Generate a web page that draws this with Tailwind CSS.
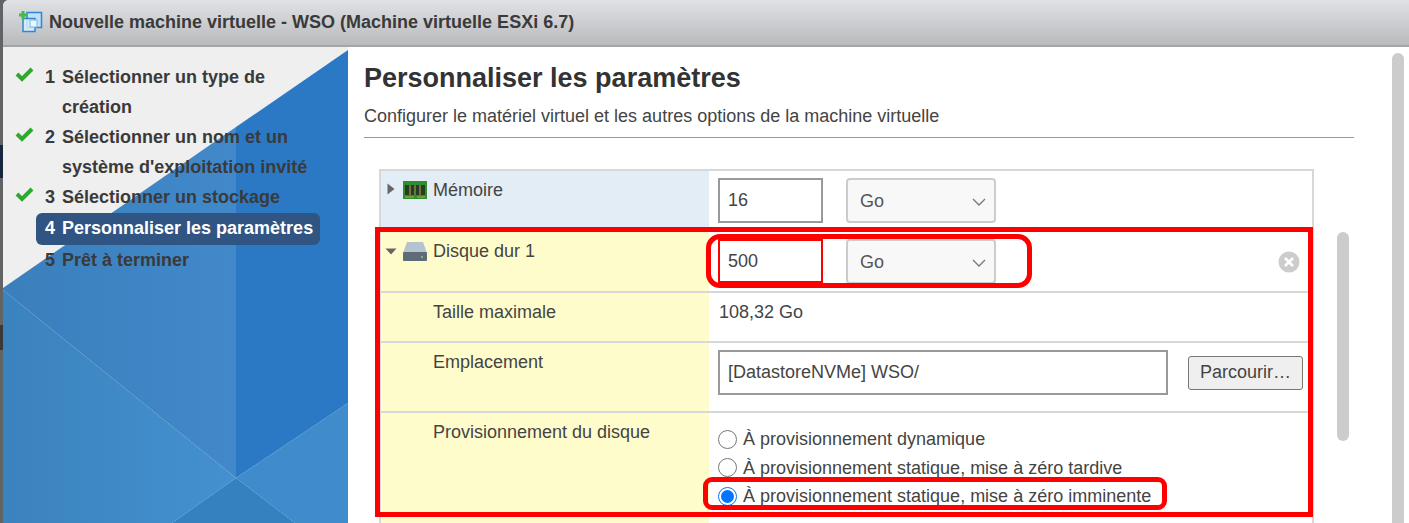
<!DOCTYPE html>
<html lang="fr">
<head>
<meta charset="utf-8">
<title>Nouvelle machine virtuelle</title>
<script src="https://cdn.jsdelivr.net/npm/@tailwindcss/browser@4"></script>
</head>
<body class="relative h-[523px] w-[1409px] overflow-hidden bg-[#626365] font-['Liberation_Sans',Arial,sans-serif] text-[18px] text-[#444]">
<div class="absolute left-0 top-[145px] h-[33px] w-[3px] bg-[#16273f]"></div>
<div class="absolute left-0 top-[325px] h-[25px] w-[3px] bg-[#3a3a36]"></div>
<div class="relative ml-[3px] flex h-[523px] w-[1406px] flex-col overflow-hidden rounded-tl-[6px] bg-white">
  <header class="flex h-[47px] shrink-0 items-center gap-[6px] border-b-[2px] border-[#a5a5a7] bg-gradient-to-b from-[#e1e2e6] to-[#b9babc] pb-[1px] pl-[15px]">
    <svg width="25" height="25" viewBox="0 0 25 25" class="shrink-0"><rect x="9" y="2.5" width="14.5" height="15" fill="#bfe0f7" stroke="#2f86d6" stroke-width="1.5"/><rect x="5" y="8.5" width="12" height="13" fill="#d9eefb" fill-opacity=".85" stroke="#2f86d6" stroke-width="1.5"/><rect x="12" y="10" width="7" height="7" fill="#eaf6fd" stroke="#7cb7e6"/><path d="M5 1v8M1 5h8" stroke="#47b84b" stroke-width="3"/></svg>
    <h1 class="text-[18px] font-bold text-[#3a3a3a]">Nouvelle machine virtuelle - WSO (Machine virtuelle ESXi 6.7)</h1>
  </header>
  <div class="flex min-h-0 flex-1">
    <nav class="relative w-[345px] shrink-0 overflow-hidden bg-[#efefef] pt-[15px] font-bold text-[#3a3a3a]">
      <svg class="absolute inset-0" width="345" height="476" viewBox="0 0 345 476">
        <defs>
          <linearGradient id="a" x1="0" x2="1" y1="0" y2="0"><stop offset="0" stop-color="#3b7fbc"/><stop offset="1" stop-color="#4189ca"/></linearGradient>
          <linearGradient id="b" x1="0" x2="1" y1="0" y2="0"><stop offset="0" stop-color="#3b83bd"/><stop offset="1" stop-color="#4490d0"/></linearGradient>
        </defs>
        <polygon points="345,3 345,356 233,431 233,80" fill="#2b79c4"/>
        <polygon points="0,241 233,80 233,431 0,243" fill="url(#a)"/>
        <polygon points="0,243 233,431 169,476 0,476" fill="url(#b)"/>
        <polygon points="233,431 345,356 345,476 292,476" fill="#3f8bcc"/>
        <polygon points="233,431 292,476 169,476" fill="#3581bf"/>
      </svg>
      <ol class="relative flex flex-col leading-[30px]">
        <li class="flex pl-[12px]"><svg width="19" height="16" viewBox="0 0 19 16" class="mt-[4px] shrink-0"><path d="M2 8l5 5L17 3" fill="none" stroke="#2fa82f" stroke-width="4"/></svg><span class="w-[17px] pl-[11px] box-content">1</span><span class="w-[240px]">Sélectionner un type de création</span></li>
        <li class="flex pl-[12px]"><svg width="19" height="16" viewBox="0 0 19 16" class="mt-[4px] shrink-0"><path d="M2 8l5 5L17 3" fill="none" stroke="#2fa82f" stroke-width="4"/></svg><span class="w-[17px] pl-[11px] box-content">2</span><span class="w-[270px]">Sélectionner un nom et un système d'exploitation invité</span></li>
        <li class="flex pl-[12px]"><svg width="19" height="16" viewBox="0 0 19 16" class="mt-[4px] shrink-0"><path d="M2 8l5 5L17 3" fill="none" stroke="#2fa82f" stroke-width="4"/></svg><span class="w-[17px] pl-[11px] box-content">3</span><span>Sélectionner un stockage</span></li>
        <li class="ml-[33px] mt-[1px] flex h-[32px] w-[284px] items-center rounded-[6px] bg-[#305582] pb-[2px] pl-[9px] text-white"><span class="w-[17px]">4</span><span>Personnaliser les paramètres</span></li>
        <li class="flex pl-[42px]"><span class="w-[17px]">5</span><span>Prêt à terminer</span></li>
      </ol>
    </nav>
    <main class="relative min-w-0 flex-1 pl-[16px]">
      <h2 class="mt-[13px] text-[27px] font-bold leading-[36px] text-[#333]">Personnaliser les paramètres</h2>
      <p class="mt-[10px] w-[990px] border-b border-[#999] pb-[11px] leading-[20px]">Configurer le matériel virtuel et les autres options de la machine virtuelle</p>
      <div class="ml-[15px] mt-[31px] w-[935px] border-l-2 border-r-2 border-t-2 border-[#d8d8d8]">
        <div class="flex h-[61px] border-b-[2px] border-transparent">
          <div class="flex w-[328px] shrink-0 bg-[#e3edf5] pt-[8px]">
            <svg width="8" height="12" viewBox="0 0 8 12" class="ml-[6px] mt-[4px]"><path d="M.5 .5L7.5 6L.5 11.5z" fill="#666"/></svg>
            <svg width="24" height="18" viewBox="0 0 24 18" class="ml-[8px] mt-[2px]"><rect y="0" width="24" height="18" fill="#2f8f2f"/><rect x="2" y="4" width="20" height="10" fill="#2b3a22"/><path d="M7 4v10M12 4v10M17 4v10" stroke="#7a8d4f" stroke-width="1.5"/><path d="M2 16h9M14 16h8" stroke="#c8a030"/></svg>
            <span class="ml-[6px] leading-[22px]">Mémoire</span>
          </div>
          <div class="flex flex-1 items-start gap-[23px] pl-[9px] pt-[7px]">
            <div class="flex h-[45px] w-[105px] items-center border-2 border-[#999] pl-[8px]">16</div>
            <div class="flex h-[45px] w-[150px] items-center justify-between rounded-[4px] border-2 border-[#ccc] bg-[#f8f8f8] pl-[12px] pr-[8px] pt-[2px] text-[#555]">Go<svg width="14" height="8" viewBox="0 0 14 8"><path d="M1 1l6 6 6-6" fill="none" stroke="#777" stroke-width="1.3"/></svg></div>
          </div>
        </div>
        <div class="flex h-[61px] border-b-[2px] border-[#d8d8d8]">
          <div class="flex w-[328px] shrink-0 bg-[#fffccc] pt-[8px]">
            <svg width="12" height="7" viewBox="0 0 12 7" class="ml-[4px] mt-[8px]"><path d="M.5 .5h11L6 6.5z" fill="#666"/></svg>
            <svg width="24" height="19" viewBox="0 0 24 19" class="ml-[6px] mt-[2px]"><path d="M4 0h16l4 11H0z" fill="#b5c2d0"/><rect y="10" width="24" height="9" rx="1" fill="#5e6b78"/><circle cx="19" cy="15" r="1" fill="#7fd06f"/></svg>
            <span class="ml-[6px] leading-[22px]">Disque dur 1</span>
          </div>
          <div class="flex flex-1 items-start gap-[23px] pl-[9px] pt-[7px]">
            <div class="flex h-[45px] w-[105px] items-center pl-[10px]">500</div>
            <div class="flex h-[45px] w-[150px] items-center justify-between rounded-[4px] border-2 border-[#ccc] bg-[#f8f8f8] pl-[12px] pr-[8px] pt-[2px] text-[#555]">Go<svg width="14" height="8" viewBox="0 0 14 8"><path d="M1 1l6 6 6-6" fill="none" stroke="#777" stroke-width="1.3"/></svg></div>
            <svg width="22" height="22" viewBox="0 0 22 22" class="ml-[259px] mt-[12px]"><circle cx="11" cy="11" r="10.5" fill="#ccc"/><path d="M7 7l8 8M15 7l-8 8" stroke="#fff" stroke-width="2.6"/></svg>
          </div>
        </div>
        <div class="flex h-[50px] border-b-[2px] border-[#d8d8d8]">
          <div class="w-[328px] shrink-0 bg-[#fffccc] pl-[52px] pt-[8px] leading-[22px]">Taille maximale</div>
          <div class="flex-1 pl-[10px] pt-[8px] leading-[22px]">108,32 Go</div>
        </div>
        <div class="flex h-[70px] border-b-[2px] border-[#d8d8d8]">
          <div class="w-[328px] shrink-0 bg-[#fffccc] pl-[52px] pt-[8px] leading-[22px]">Emplacement</div>
          <div class="flex flex-1 items-start gap-[20px] pl-[9px] pt-[7px]">
            <div class="flex h-[45px] w-[450px] items-center border-2 border-[#999] pl-[8px]">[DatastoreNVMe] WSO/</div>
            <button class="mt-[6px] h-[34px] w-[115px] rounded-[3px] border border-[#777] bg-[#efefef] pb-[2px] text-[#444]">Parcourir…</button>
          </div>
        </div>
        <div class="flex h-[112px]">
          <div class="w-[328px] shrink-0 bg-[#fffccc] pl-[52px] pt-[8px] leading-[22px]">Provisionnement du disque</div>
          <div class="flex flex-1 flex-col pl-[9px] pt-[12px] leading-[28.5px]">
            <label class="flex items-center gap-[6px]"><input type="radio" name="p" class="m-0 size-[19px] appearance-none rounded-full border border-[#767676] bg-white">À provisionnement dynamique</label>
            <label class="flex items-center gap-[6px]"><input type="radio" name="p" class="m-0 size-[19px] appearance-none rounded-full border border-[#767676] bg-white">À provisionnement statique, mise à zéro tardive</label>
            <label class="flex items-center gap-[6px]"><span class="flex size-[19px] items-center justify-center rounded-full border border-[#0075ff] bg-white"><span class="size-[13px] rounded-full bg-[#0075ff]"></span></span>À provisionnement statique, mise à zéro imminente</label>
          </div>
        </div>
      </div>
      <div class="absolute left-[989px] top-[185px] h-[209px] w-[12px] rounded-[6px] bg-[#cccccc]"></div>
      <div class="absolute left-[1044px] top-[6px] h-[480px] w-[12px] rounded-t-[6px] bg-[#cccccc]"></div>
      <div class="absolute left-[27px] top-[180px] h-[290px] w-[938px] border-[5px] border-[#ff0000]"></div>
      <div class="absolute left-[358px] top-[187px] h-[54px] w-[326px] rounded-[14px] border-[5px] border-[#ff0000]"></div>
      <div class="absolute left-[370px] top-[192px] h-[44px] w-[105px] border-2 border-[#ff0000]"></div>
      <div class="absolute left-[355px] top-[430px] h-[33px] w-[464px] rounded-[9px] border-[5px] border-[#ff0000]"></div>
    </main>
  </div>
</div>
</body>
</html>
